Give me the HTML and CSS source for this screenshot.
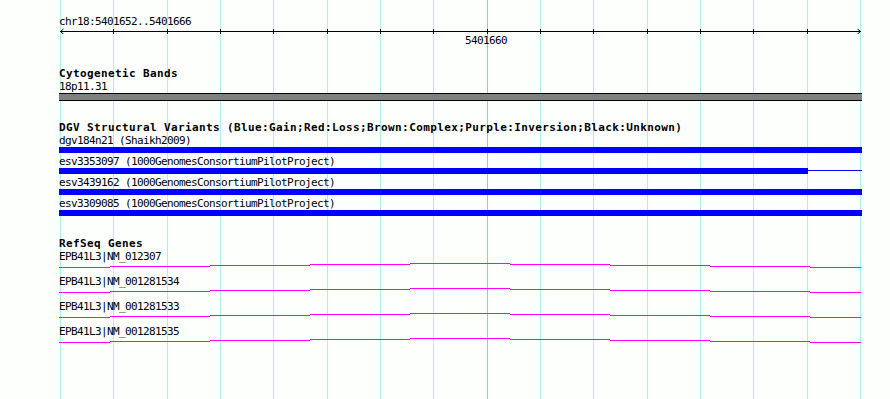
FILE: index.html
```html
<!DOCTYPE html>
<html lang="en">

<head>
    <meta charset="UTF-8">
    <meta name="viewport" content="width=device-width, initial-scale=1.0">
    <title>chr18:5401652..5401666</title>
    <link rel="stylesheet" href="styles.css">
</head>

<body>
    <div class="browser">
        <!-- one grid line per base -->
        <svg class="grid" width="890" height="399" shape-rendering="crispEdges">
            <rect x="60" y="0" width="1" height="399" />
            <rect x="113" y="0" width="1" height="399" />
            <rect x="167" y="0" width="1" height="399" />
            <rect x="220" y="0" width="1" height="399" />
            <rect x="273" y="0" width="1" height="399" />
            <rect x="327" y="0" width="1" height="399" />
            <rect x="380" y="0" width="1" height="399" />
            <rect x="433" y="0" width="1" height="399" />
            <rect class="major" x="487" y="0" width="1" height="399" />
            <rect x="540" y="0" width="1" height="399" />
            <rect x="593" y="0" width="1" height="399" />
            <rect x="647" y="0" width="1" height="399" />
            <rect x="700" y="0" width="1" height="399" />
            <rect x="753" y="0" width="1" height="399" />
            <rect x="807" y="0" width="1" height="399" />
            <rect x="860" y="0" width="1" height="399" />
        </svg>

        <div class="tracks">
            <div class="ruler">
                <div class="label">chr18:5401652..5401666</div>
                <svg class="ruler-line" width="803" height="6">
                    <g shape-rendering="crispEdges">
                        <rect x="1" y="3" width="801" height="1" />
                        <rect x="54" y="1" width="1" height="5" />
                        <rect x="108" y="1" width="1" height="5" />
                        <rect x="161" y="1" width="1" height="5" />
                        <rect x="214" y="1" width="1" height="5" />
                        <rect x="268" y="1" width="1" height="5" />
                        <rect x="321" y="1" width="1" height="5" />
                        <rect x="374" y="1" width="1" height="5" />
                        <rect x="428" y="1" width="1" height="5" />
                        <rect x="481" y="1" width="1" height="5" />
                        <rect x="534" y="1" width="1" height="5" />
                        <rect x="588" y="1" width="1" height="5" />
                        <rect x="641" y="1" width="1" height="5" />
                        <rect x="694" y="1" width="1" height="5" />
                        <rect x="748" y="1" width="1" height="5" />
                    </g>
                    <path d="M4.5 1 L1.5 3.5 L4.5 6" />
                    <path d="M798.5 1 L801.5 3.5 L798.5 6" />
                </svg>
                <div class="label ruler-mark">5401660</div>
            </div>

            <div class="track">
                <div class="track-title">Cytogenetic Bands</div>
                <div class="label">18p11.31</div>
                <div class="band"></div>
            </div>

            <div class="track">
                <div class="track-title">DGV Structural Variants (Blue:Gain;Red:Loss;Brown:Complex;Purple:Inversion;Black:Unknown)</div>
                <div class="variant">
                    <div class="label">dgv184n21 (Shaikh2009)</div>
                    <div class="variant-bar"></div>
                </div>
                <div class="variant">
                    <div class="label">esv3353097 (1000GenomesConsortiumPilotProject)</div>
                    <div class="variant-bar partial">
                        <div class="variant-fill"></div>
                    </div>
                </div>
                <div class="variant">
                    <div class="label">esv3439162 (1000GenomesConsortiumPilotProject)</div>
                    <div class="variant-bar"></div>
                </div>
                <div class="variant">
                    <div class="label">esv3309085 (1000GenomesConsortiumPilotProject)</div>
                    <div class="variant-bar"></div>
                </div>
            </div>

            <div class="track genes">
                <div class="track-title">RefSeq Genes</div>
                <div class="gene">
                    <div class="label">EPB41L3|NM_012307</div>
                    <svg class="gene-line" width="803" height="5"><use href="#gene-path" /></svg>
                </div>
                <div class="gene">
                    <div class="label">EPB41L3|NM_001281534</div>
                    <svg class="gene-line" width="803" height="5"><use href="#gene-path" /></svg>
                </div>
                <div class="gene">
                    <div class="label">EPB41L3|NM_001281533</div>
                    <svg class="gene-line" width="803" height="5"><use href="#gene-path" /></svg>
                </div>
                <div class="gene">
                    <div class="label">EPB41L3|NM_001281535</div>
                    <svg class="gene-line" width="803" height="5"><use href="#gene-path" /></svg>
                </div>
            </div>
        </div>
    </div>

    <svg class="defs" width="0" height="0">
        <defs>
            <g id="gene-path" shape-rendering="crispEdges">
                <rect x="0" y="4" width="51" height="1" />
                <rect x="51" y="3" width="100" height="1" />
                <rect x="151" y="2" width="100" height="1" />
                <rect x="251" y="1" width="100" height="1" />
                <rect x="351" y="0" width="100" height="1" />
                <rect x="451" y="1" width="100" height="1" />
                <rect x="551" y="2" width="100" height="1" />
                <rect x="651" y="3" width="100" height="1" />
                <rect x="751" y="4" width="51" height="1" />
            </g>
        </defs>
    </svg>
</body>

</html>
```

FILE: styles.css
```css
body {
    margin: 0;
    background-color: #fdfffd;
}

.browser {
    position: relative;
    width: 890px;
    height: 399px;
    overflow: hidden;
    background-color: #fdfffd;
    font-family: "DejaVu Sans Mono", "Liberation Mono", monospace;
    color: #000;
}

.grid {
    position: absolute;
    top: 0;
    left: 0;
    fill: #afeeee;
}

.grid .major {
    fill: #8ccbe6;
}

.defs {
    position: absolute;
}

.tracks {
    position: relative;
    width: 803px;
    padding-left: 59px;
}

.label {
    font-size: 11px;
    letter-spacing: -0.62px;
    line-height: 13px;
    white-space: nowrap;
}

.track-title {
    font-size: 11px;
    font-weight: bold;
    letter-spacing: 0.38px;
    line-height: 13px;
    white-space: nowrap;
}

/* ruler */
.ruler {
    padding-top: 15px;
}

.ruler-line {
    display: block;
    fill: #000;
}

.ruler-line path {
    fill: none;
    stroke: #000;
    stroke-width: 1;
}

.ruler-mark {
    padding-left: 406px;
}

/* tracks */
.track {
    margin-top: 20px;
}

.band {
    height: 6px;
    background-color: #808080;
    border-top: 1px solid #000;
    border-bottom: 1px solid #000;
}

.variant + .variant {
    margin-top: 2px;
}

.variant-bar {
    height: 6px;
    background-color: #0000ff;
}

.variant-bar.partial {
    display: flex;
    align-items: center;
    background: linear-gradient(#0000ff, #0000ff) 0 2px / 100% 1px no-repeat;
}

.variant-fill {
    width: 749px;
    height: 6px;
    background-color: #0000ff;
}

.genes {
    margin-top: 22px;
}

.genes .track-title {
    line-height: 12px;
}

.gene + .gene {
    margin-top: 7px;
}

.gene-line {
    display: block;
    fill: #ff00ff;
}
```
